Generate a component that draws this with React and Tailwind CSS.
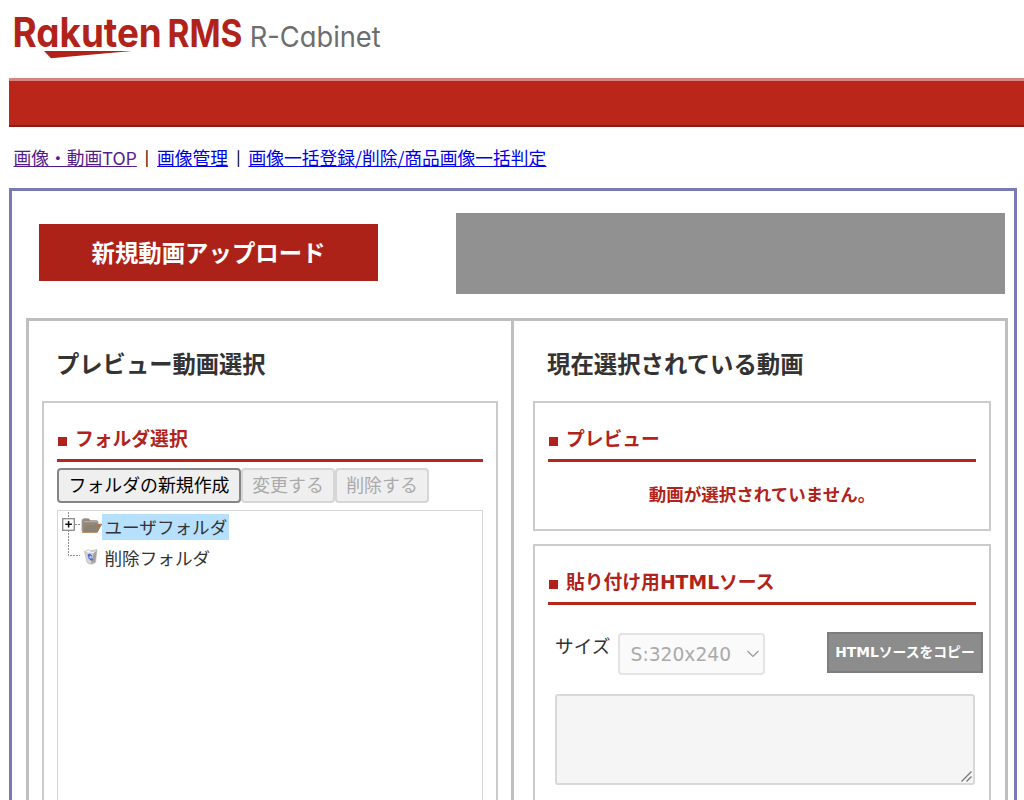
import React from "react";

function Logo() {
  return (
    <svg width="400" height="78" viewBox="0 0 400 78" className="block font-[Inter,sans-serif] [font-feature-settings:'cv11']" role="img">
      <g fill="#b1231a" fontWeight="700">
        <text transform="translate(12.6 46.7) scale(.88 1)" fontSize="40.5" textLength="169.5" lengthAdjust="spacingAndGlyphs">Rakuten</text>
        <text x="167.5" y="46.7" fontSize="38.5" textLength="75" lengthAdjust="spacingAndGlyphs">RMS</text>
      </g>
      <text x="249.7" y="46.7" fill="#6c6d6f" fontWeight="400" fontSize="28" textLength="131" lengthAdjust="spacingAndGlyphs">R-Cabinet</text>
      <path d="M44 51H132L51 58.2Z" fill="#b1231a" />
    </svg>
  );
}

function SectionTitle({ children }) {
  return (
    <h3 className="flex h-[45px] items-start border-b-3 border-[#b7261b] pt-[9px] text-[18.8px] leading-[28px] font-bold whitespace-nowrap text-[#b1231a]">
      <span className="mt-[11px] mr-[8px] ml-px size-[9px] shrink-0 bg-[#b1231a]" />
      {children}
    </h3>
  );
}

function TreeGraphics() {
  return (
    <svg width="44" height="60" viewBox="58 511 44 60" className="block shrink-0">
      <path d="M68.5 512V555.5H80M75 524.5H81" fill="none" stroke="#8c8c8c" strokeDasharray="2 1" />
      <rect x="62.7" y="518.7" width="11.6" height="11.6" fill="#fff" stroke="#8a8a8a" strokeWidth="1.3" />
      <path d="M65.3 524.3H71.9M68.6 521V527.6" stroke="#111" strokeWidth="1.5" />
      <path d="M82 531V521Q82 518.7 84 518.7H88.5L90.5 520.5H96.5Q98 520.5 98 522.5V531Z" fill="#8f887e" stroke="#aa9c8b" strokeWidth="0.8" />
      <path d="M84 521.7H97" stroke="#bbb3a8" />
      <path d="M82.5 532.3L87.2 525.6H94L96 524.2H101.5L97 532.3Z" fill="#858477" stroke="#ad7a4c" strokeWidth="1.1" strokeLinejoin="round" />
      <path d="M84.5 551.5L97 549.8L95.5 562.5Q91 565.8 87 562.5Z" fill="#d5d6d3" stroke="#b9b9b4" strokeWidth="0.7" />
      <path d="M93.5 553L96.7 551L95.3 562L91 564Z" fill="#a3a39d" />
      <path d="M84.5 551.5L88.5 549.5L92 552L97 549.8L93.5 553.5L88 553.2Z" fill="#f5f5f3" stroke="#b8b8b0" strokeWidth="0.6" />
      <path d="M87.5 554.5L90 553.5L92.5 556L91 557L93.5 559.5L91.5 561L88.5 558.5Z" fill="#5268dc" />
      <path d="M88.8 557.2L91 555.5L91.5 559Z" fill="#c6d0f8" />
    </svg>
  );
}

function LeftPane() {
  return (
    <section className="flex w-[482px] shrink-0 flex-col pr-[13px] pl-[13px]">
      <h2 className="h-[80px] pt-[27px] pl-[14px] text-[23.3px] leading-[34px] font-bold whitespace-nowrap text-[#333]">プレビュー動画選択</h2>
      <div className="flex grow flex-col border-2 border-[#cbcbcb] px-[13px] pt-[14px]">
        <SectionTitle>フォルダ選択</SectionTitle>
        <div className="mt-[6px] flex h-[35px] text-[17.9px] leading-[31px] whitespace-nowrap">
          <button className="w-[184px] rounded-[4px] border-2 border-[#858585] bg-[#efefef] text-black">フォルダの新規作成</button>
          <button className="w-[94px] rounded-[4px] border-2 border-[#d6d6d6] bg-[#efefef] text-[#aaa]">変更する</button>
          <button className="w-[94px] rounded-[4px] border-2 border-[#d6d6d6] bg-[#efefef] text-[#aaa]">削除する</button>
        </div>
        <div className="mt-[7px] flex grow border border-[#d6d6d6]">
          <TreeGraphics />
          <div className="flex flex-col items-start pt-[3px] text-[17.6px] whitespace-nowrap text-[#333]">
            <span className="h-[26px] bg-[#b6e0fc] pr-[1.5px] pl-[2.5px] leading-[28px]">ユーザフォルダ</span>
            <span className="mt-[5px] h-[26px] pl-[2.5px] leading-[29px]">削除フォルダ</span>
          </div>
        </div>
      </div>
    </section>
  );
}

function RightPane() {
  return (
    <section className="flex w-[494px] shrink-0 flex-col border-l-3 border-[#bfbfbf] pr-[14px] pl-[19px]">
      <h2 className="h-[80px] pt-[27px] pl-[14px] text-[23.4px] leading-[34px] font-bold whitespace-nowrap text-[#333]">現在選択されている動画</h2>
      <div className="h-[130px] shrink-0 border-2 border-[#cbcbcb] px-[13px] pt-[14px]">
        <SectionTitle>プレビュー</SectionTitle>
        <p className="pt-[20px] text-center text-[17.5px] leading-[26px] font-bold text-[#b1231a]">動画が選択されていません。</p>
      </div>
      <div className="mt-[13px] flex grow flex-col border-2 border-[#cbcbcb] px-[13px] pt-[14px]">
        <SectionTitle>
          <span>貼り付け用HTMLソース</span>
        </SectionTitle>
        <div className="mt-[27px] mr-[-7px] flex h-[43px] items-start pl-[7px]">
          <span className="pt-px text-[18.7px] leading-[28px] text-[#333]">サイズ</span>
          <button className="mt-px ml-[7px] flex h-[42px] w-[147px] items-center justify-between rounded-[4px] border-2 border-[#e4e4e4] bg-[#fafafa] pr-[4px] pl-[11px] text-[18.7px] text-[#aaa]">
            <span className="pt-[2px]">S:320x240</span>
            <svg width="12" height="8" viewBox="0 0 12 8" fill="none" stroke="#999" strokeWidth="1.2"><path d="M.5 1L6 6.5L11.5 1" /></svg>
          </button>
          <button className="ml-auto h-[41px] w-[156px] border-2 border-[#7d7d7d] bg-[#8c8c8c] text-[13.8px] font-bold whitespace-nowrap text-white">HTMLソースをコピー</button>
        </div>
        <div className="mt-[19px] ml-[7px] flex h-[91px] w-[420px] items-end justify-end rounded-[3px] border-2 border-[#d8d8d8] bg-[#f5f5f5] pr-px pb-px">
          <svg width="11" height="11" viewBox="0 0 11 11" fill="none" stroke="#777" strokeWidth="1.3"><path d="M.5 10.5L10.5 .5M5.5 10.5L10.5 5.5" /></svg>
        </div>
      </div>
    </section>
  );
}

export default function App() {
  return (
    <div className="flex h-[800px] w-[1024px] flex-col overflow-hidden bg-white font-['DejaVu_Sans','Noto_Sans_CJK_JP',sans-serif]">
      <header className="h-[78px] shrink-0">
        <Logo />
      </header>
      <div className="ml-[9px] h-[49px] shrink-0 border-t-3 border-b-2 border-t-[#d78480] border-b-[#8a1a12] bg-[#bb261a]" />
      <nav className="flex h-[61px] shrink-0 items-start pt-[17px] pl-[13.5px] font-['Noto_Sans_CJK_JP',sans-serif] text-[17.75px] leading-[26px] whitespace-nowrap text-black">
        <a className="text-[#551a8b] underline">画像・動画TOP</a>
        <span className="w-[20.3px] text-center text-[15px] font-medium">|</span>
        <a className="text-[#0000ee] underline">画像管理</a>
        <span className="w-[20.3px] text-center text-[15px] font-medium">|</span>
        <a className="text-[#0000ee] underline">画像一括登録/削除/商品画像一括判定</a>
      </nav>
      <main className="ml-[9px] flex w-[1008px] grow flex-col border-3 border-b-0 border-[#7a7ab8]">
        <div className="flex h-[127px] shrink-0 items-start justify-between pr-[9px] pl-[27px]">
          <button className="mt-[33px] h-[57px] w-[339px] bg-[#ad2218] pt-[4px] text-[23.4px] font-bold whitespace-nowrap text-white">新規動画アップロード</button>
          <div className="mt-[22px] h-[81px] w-[549px] bg-[#919191]" />
        </div>
        <div className="mb-[-40px] ml-[14px] flex w-[982px] grow border-3 border-[#bfbfbf]">
          <LeftPane />
          <RightPane />
        </div>
      </main>
    </div>
  );
}
